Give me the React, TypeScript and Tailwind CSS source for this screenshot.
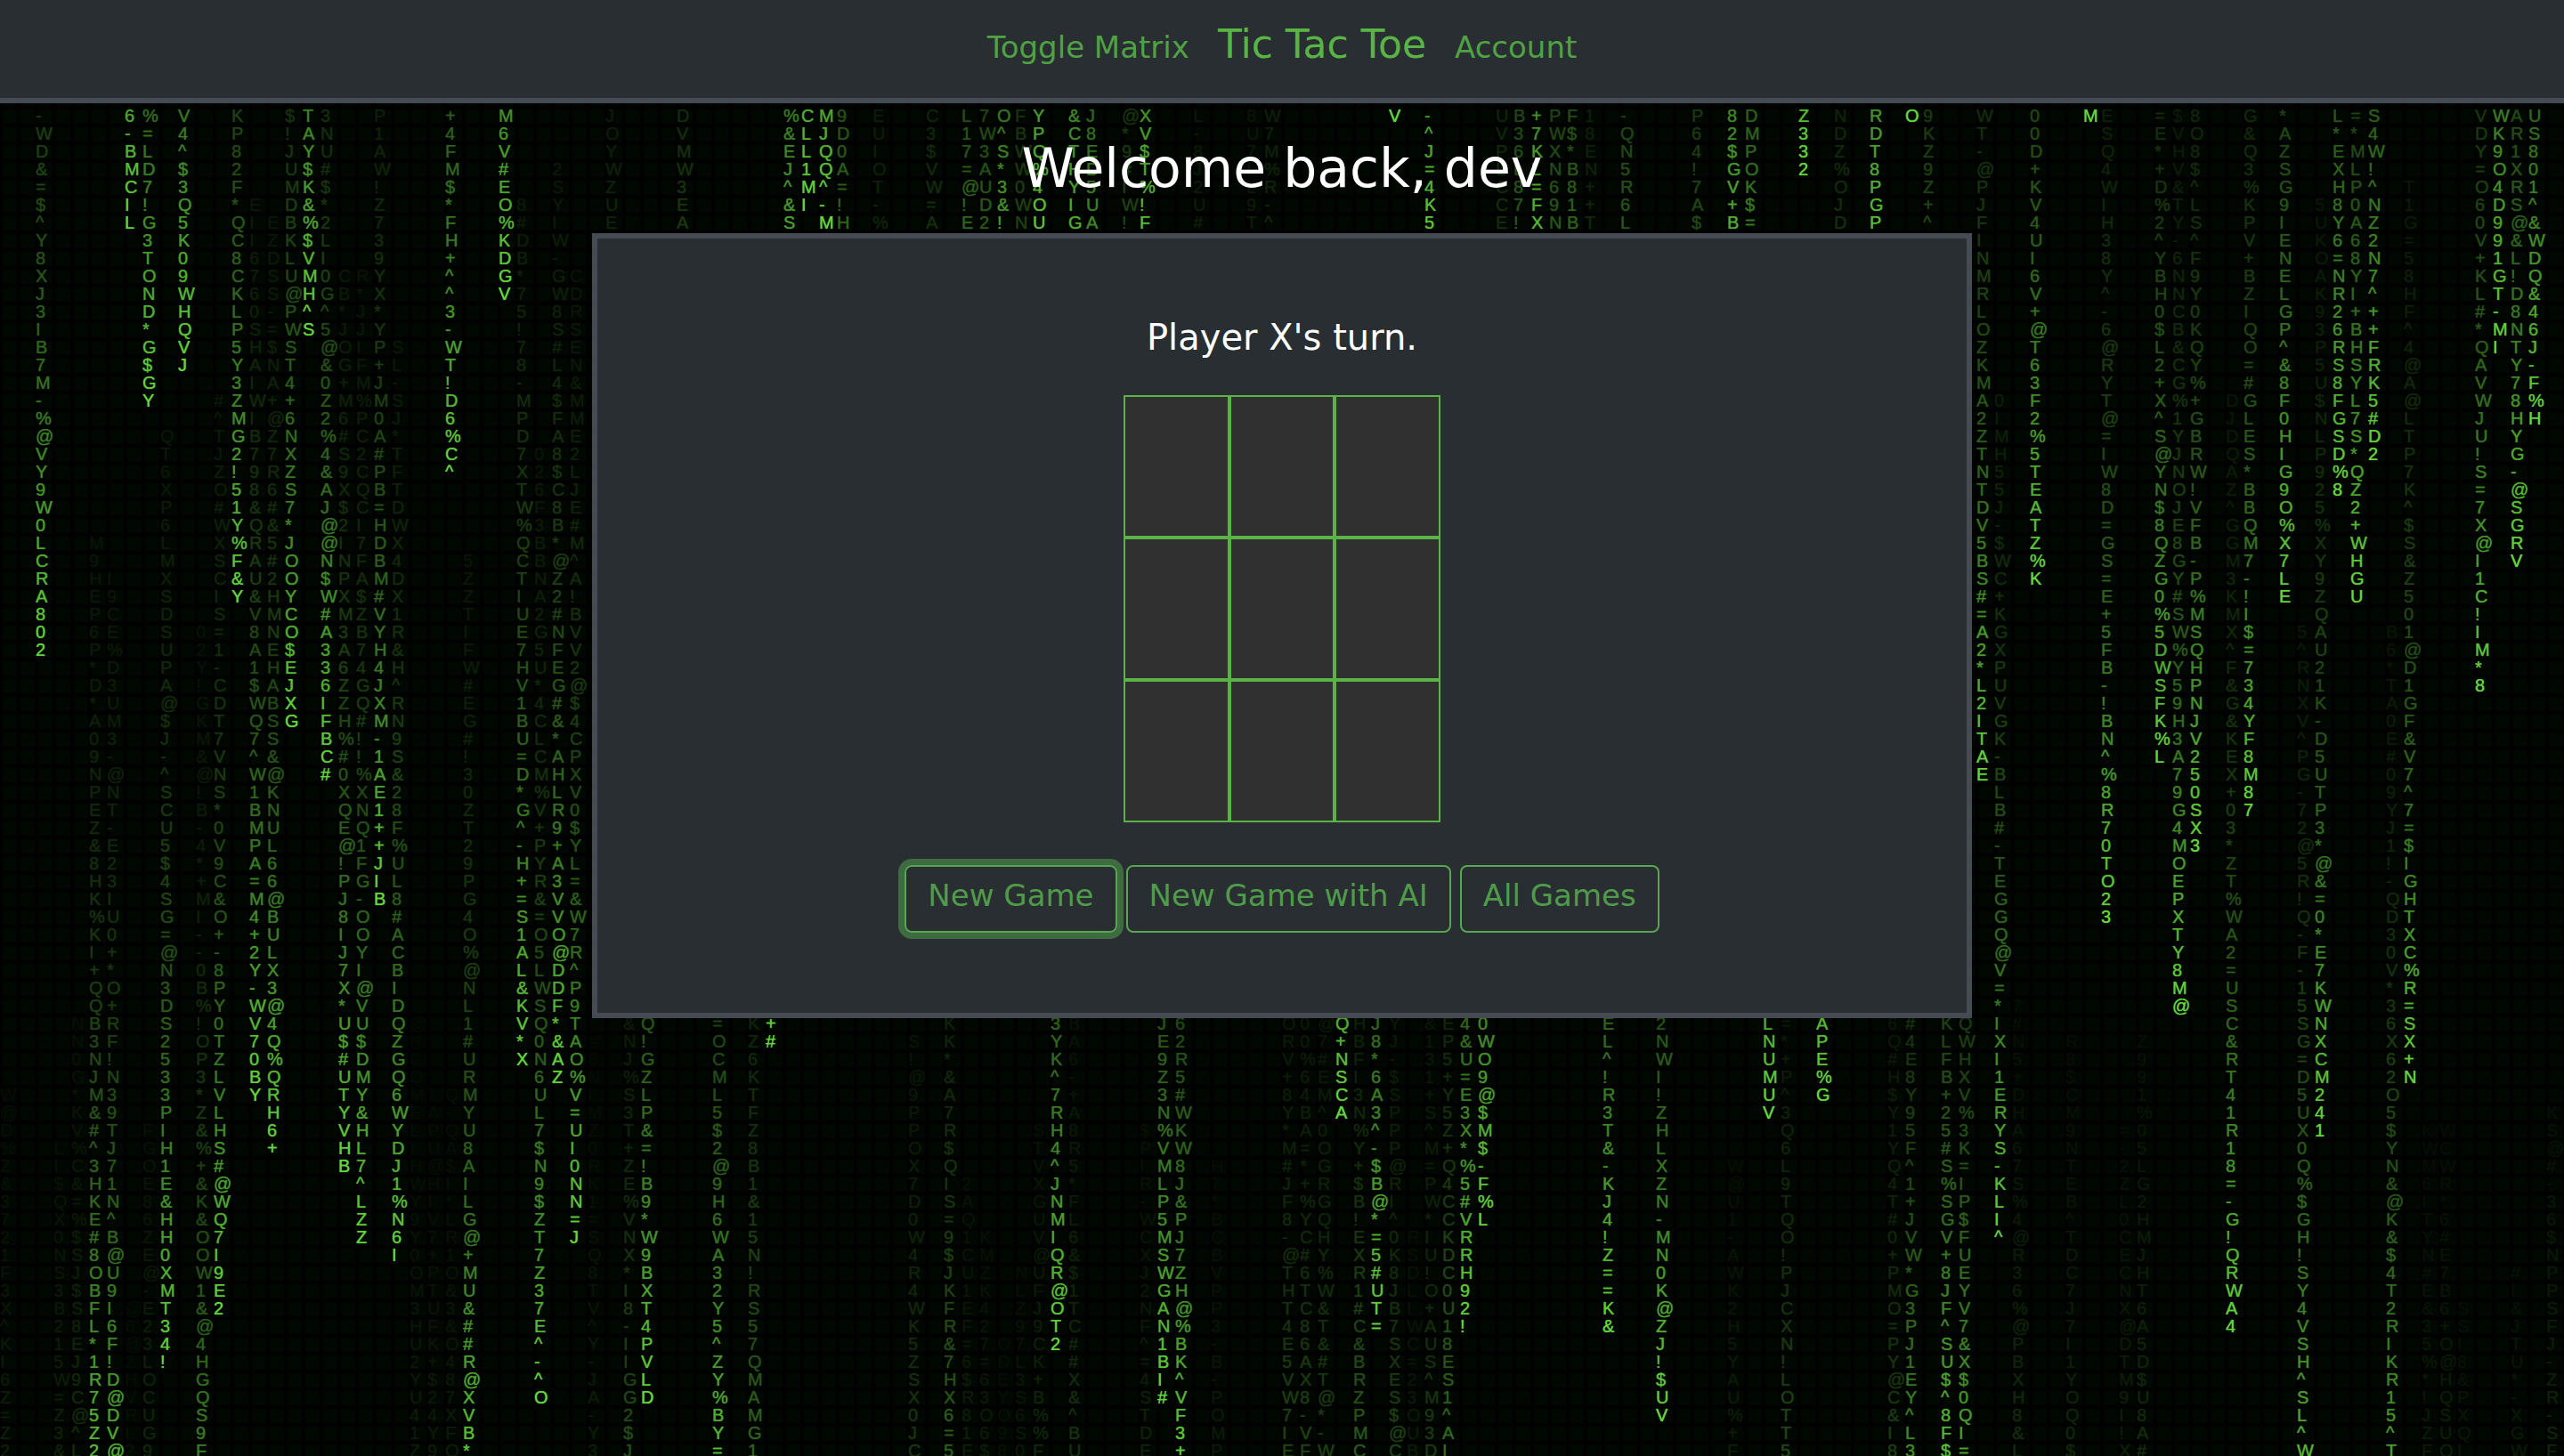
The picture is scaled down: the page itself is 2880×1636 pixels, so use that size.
import React from "react";

type Trail = { col: number; row: number; head: number; text: string };

const ROW_HEIGHT = 20;
const COLUMN_COUNT = 144;
const FADE = 0.957;

/* column, first row, row of the leading glyph, glyphs from top to bottom */
const DROPS: [number, number, number, string][] = [
  [0, 56, 120, "W@D%Z&3721F3X^KI6Z=Z2"],
  [2, 1, 31, "-WD&=$^Y8XJ3IB7M-%@VY9W0LCRA802"],
  [3, 59, 118, "LI$QX0NS3B215W=Z3&"],
  [4, 52, 112, "NN0G*KV%C&=%$SJ$S8EJ9C@^L"],
  [5, 25, 79, "M9HEP6P*D*A09NPEZ&8HK%KI+QQB3NJM&#^3HKE#8OBFL*1R75Z2"],
  [6, 27, 81, "I9CE%D3UM3-@NT-E23IU0+*O+RF!N39TJ71N^B@U9I6F!D@DV@"],
  [7, 1, 7, "6-BMCIL"],
  [7, 68, 134, "@6@2HVRI2"],
  [8, 1, 17, "%=LD7!G3TOND*G$GY"],
  [8, 58, 116, "FGOE86ZE@-E23LOCUG9"],
  [9, 19, 71, "QT6XP6LMXSDSUPA@$J-^SCU5$4SG=@N3DS2533PIH1E&HH0XMT34!"],
  [10, 1, 15, "V4^$3Q5K09WHQVJ"],
  [11, 30, 88, "02Y!GKM&@!B-4*+MI--0B%!OP3*Z&%+&K&OOW1&@4HGQS9F"],
  [12, 17, 68, "#^TJZO#WXSCIS=1-CDT7VNS*0V9C&O+-8PY0TZLVLHS#@WQ7I9E2"],
  [13, 1, 28, "KP82F*QC8CKLP5Y3ZMG2!51Y%F&Y"],
  [14, 6, 56, "EII6760SHAIWIB798&QRAU&V8A1$WQ7^W1BMPA=M4+2Y-WV70BY"],
  [15, 7, 59, "EZDSS-=$NA+@Z7R6#&5#2HMNEHABSS&@KNUL66@BULX3@4Q%QRH6+"],
  [16, 1, 35, "$!JUMDBKLU@PWST4+6NXZS7*JOOYCO$EJXG"],
  [17, 1, 13, "TAY$K&%$VMH^S"],
  [18, 1, 38, "3NU#$*2LI0G^5@&0Z2%4&AJ@@N$W#A336IFBC#"],
  [19, 10, 60, "CB*JOG+M6#S9X$2INPXM3A6ZZH%#0XQE@!PJ8IJ7X*U$#UTYVHB"],
  [20, 10, 64, "R*JJIFM%PC2CQCI7FA$ZB74GQ#!!%XNQ1FG-OOYI@VU$DMY&HL7^LZZ"],
  [21, 1, 45, "P1AW!Z739YX*YP+JM0A#PB=HDBM#VYH4JXM-1AE1++JIB"],
  [22, 14, 65, "SL-SJ*TFTDWX4DX1R&H^RN9S&28F%UL8#ACBIDQZGQ6WYDJ1%N6I"],
  [23, 52, 122, "@HCQMELIHWY9Y0OM3HU2YU41Z"],
  [24, 56, 123, "7APU@HIV7+PTUFK+$24Y9"],
  [25, 1, 21, "+4FM$*FH+^^3-WT!D6%C^"],
  [25, 56, 122, "Q-QA$I*LR1O&3&O487XFO"],
  [26, 26, 78, "5ZZTIFW#EG#!30ZT29PG4O%@NL1#URMYU8AILG@+MU&##R@XVB*"],
  [28, 1, 11, "M6V#EO%KDGV"],
  [29, 6, 54, "8#DB*75!78-MPD7XTW%QCTIUE7HV1BU=D*G^-H+=S1AL&KV*X"],
  [30, 20, 73, "026F3BBNA2G5U*4CLCM%V+PYR&=O5LWSQ0N6UL7$N9$ZT7Z37E^-^O"],
  [31, 4, 55, "2SYIW-GW8S#L4$FA8$C8B*@Z2#NFEG#&*AHLR9+A3VVO@DDF*&AZ"],
  [32, 10, 64, "CDRSEN&MME2LJE#M^A!BVV2@$4CPXV0$YL=&W7R^P9TAO%V=UI0NN=J"],
  [33, 53, 121, "=8NIMZ0RK1=SQ8TV^Y-JA-Y3"],

  [34, 1, 48, "JOYWZUE"],
  [38, 1, 38, "DVMW3EA"],
  [44, 1, 14, "%&EJ^&S"],
  [45, 1, 6, "CLL1MI"],
  [46, 1, 7, "MJQQ^-M"],
  [47, 1, 24, "9D0A=!H"],
  [49, 1, 48, "EUIOT-%"],
  [52, 1, 42, "C3$VW=A"],
  [54, 1, 24, "L17=@!E"],
  [55, 1, 27, "7W3AUD2"],
  [56, 1, 15, "O^S*3&!"],
  [57, 1, 34, "FBWW0WN"],
  [58, 1, 9, "YPQ%4OU"],
  [60, 1, 12, "&CTHYIG"],
  [61, 1, 18, "J8ED5UA"],
  [63, 1, 34, "@*9#IW!"],
  [64, 1, 10, "XV$T%!F"],
  [67, 1, 52, "L-8J2U#"],
  [70, 1, 54, "8U7IL9T"],
  [71, 1, 46, "W7M%R-^"],
  [78, 1, 1, "V"],
  [80, 1, 9, "-^J=4K5"],
  [84, 1, 42, "UVPLCCE"],
  [85, 1, 27, "B36L87!"],
  [86, 1, 11, "+7KL=FX"],
  [87, 1, 28, "PWXN69N"],
  [88, 1, 25, "F$*B81B"],
  [89, 1, 46, "18EN++T"],
  [91, 1, 28, "-QN5R6L"],
  [95, 1, 32, "P64!7A$"],
  [97, 1, 12, "82$GV+B"],
  [98, 1, 20, "DMPOK$="],
  [101, 1, 4, "Z332"],
  [103, 1, 42, "NDZ%OJD"],
  [105, 1, 10, "RDT8PGP"],
  [107, 1, 1, "O"],
  [108, 1, 32, "9KZ9Z+^"],

  [35, 52, 99, "&NJ%S3T+ZE%VNX*I8-IIGG2$J"],
  [36, 52, 73, "Q!GZLP&=!B9*W9BXT4PVLD"],
  [40, 52, 79, "=OCML5$2@9H6WA32Y5^ZY%BY="],
  [42, 52, 93, "KZ6KTFZ8B1&15N!RS57QMAMG1"],
  [43, 52, 53, "+#"],
  [51, 53, 107, "S!@9PPOX7D0W4R4WK5ZSX0JC"],
  [53, 52, 94, "KK*&A7R$QIS=9$JKFR&7HX6=5"],
  [54, 61, 120, "2AQ1CU1EF=6$R81E"],
  [55, 64, 123, "KMZK427=63O6$"],
  [56, 70, 134, "ODEYO98"],
  [57, 66, 126, "NLZ97L3S6S0"],
  [58, 58, 115, "STVXGUV@UFJ9CK+B%%F"],
  [59, 52, 70, "3YK^7RH4^JNMIQR@OT2"],
  [60, 52, 109, "BA6-+A8R5*FL6&$1TC##X&^BU"],
  [64, 58, 118, "$PIR-WCXJ2NF^=4STDE"],
  [65, 52, 73, "JE9Z3N%VMLP5MSWGAN1BI#"],
  [66, 52, 77, "62R5#WKW8J&PJ7ZH@%BK^VF3+"],
  [68, 60, 124, "H7*BCBVPP3-B-POMP"],
  [72, 52, 102, "ORV+8Y*M#JF8-@THT4E5VW7IE"],
  [73, 52, 102, "00%64BA=*+%YC#6TC86AX8-VF"],
  [74, 52, 104, "@7#EM^0OGRGQHY%W&T&#T@*-W"],
  [75, 52, 57, "Q+NSCA"],
  [76, 52, 96, "HBFI3N%Y+$B!EXR1#C&BRZPMC"],
  [77, 52, 69, "J8*6A3^-$B@*=5#UT="],
  [78, 52, 103, "YJ-$SPPP@RI^0K8JB7SXES$@C"],
  [79, 64, 124, "RSDLIWC=23OUB"],
  [80, 52, 106, "&131+S^M=PW*IU!O+AUS^M93D"],
  [81, 52, 92, "EP5+Y5Z+Q4CCKDC0U18ES1^AI"],
  [82, 52, 69, "4&U=E3X*%5#VRRH92!"],
  [83, 52, 63, "0WO9@$M$-F%L"],
  [90, 52, 69, "EL^!R3T&-KJ4!Z==K&"],
  [93, 52, 74, "2NWI!ZHLXZN-MN0K@ZJ!$UV"],
  [97, 60, 121, "W@U1-AWK2H5YAU%+F"],
  [99, 52, 57, "LNUMUV"],
  [100, 52, 101, "=*+P^3Q6L9TQO!PJCXN!LOTT5"],
  [102, 52, 56, "APE%G"],
  [106, 52, 104, "6Q#H$Y1YQ4T#0+PMO=PY@C&I8"],
  [107, 52, 86, "#4E8Y95F^1+JVW*G3PJ1EY^L3"],
  [109, 52, 79, "KLFB+25#S%SGV+8JF^SU$^8F$"],
  [110, 52, 82, "QWHXV%3K=IP$FUEYV7&X$0QI="],

  [111, 1, 38, "WT-@PJFINMRLOZKMA2ZTNTDV5BS#=A2*L2ITAE"],
  [112, 17, 64, "0IMH55J-$WC+KGXPUVGK-BLB#-TEGGQ@V=*IXI1ERYS-KLI^"],
  [113, 51, 112, "7#N5+DHA67S%4@R36%@PBXH8&L"],
  [114, 1, 27, "00D+KV4UI6V+@T63F2%5TEATZ%K"],
  [116, 53, 115, "R8$CM9NTEB^TDC7J7I1YOQ0$"],
  [117, 1, 1, "M"],
  [118, 1, 46, "ESQ4WIH38Y^-6@RYT@=IW8D=GS=E+5FB-!BN^%8R70TO23"],
  [119, 58, 119, "=-2ZL0CECNX@DTM9I!X"],
  [120, 53, 112, "Z991%05LG2HMJHT6A5D$U8A#"],
  [121, 1, 37, "=E*+D%2^YBH0$L2+X^S@YN$8QZG0%5DWSFK%L"],
  [122, 1, 51, "$VHV&TY-6NNCB&CG%1YJNOJE8GY#SW%Y59H3A79G4MOEPXTY8M@"],
  [123, 1, 42, "8O8$^LS^F9Y0KQY%+GBRW!VFB-P%MSQHPNJV250SX3"],
  [125, 17, 69, "DJDQAZ^GGM3KMX^F&G&KEX+03*ZT%WA2=USC&RT41R18=-G!QRWA4"],
  [126, 1, 40, "G&Q3%KPV+BZIQO=#GLES*BBQM7-!I$=734YF8M87"],
  [128, 1, 28, "*AZSG9IENELGP^&8F0HIG9O%X7LE"],
  [129, 30, 80, "5^RNXV^PG-72@5R!Q-F-15SG=D5UX0Q%$GH!SY4VSH^SL^W"],
  [130, 6, 58, "5UKOAK93P5U$NLP925%XY9ZQAU21K-D5UTP3*@&=0*E7KWNXCM241"],
  [131, 1, 22, "L*EXH8Y6=NR26RS8FGSD%8"],
  [132, 1, 28, "=*MLP0A68YI+BHSYL7S*QZ2+WHGU"],
  [133, 1, 20, "S4W!^NZ2N7^++FRK5#D2"],
  [134, 30, 83, "B6*TA0E#09YJ1!-QD30V*36X62O5$YN&@K&$4T2RIKR15^T"],
  [135, 5, 55, "T1G=58HF^4@A@LTP7K^$S&Z501@D1GF&V7^7=$IGHTXC%R=SX+N"],
  [136, 58, 123, "KWM6ITYN#E&35%*!JZF"],
  [137, 58, 121, "WCWR*6#E7B6+O@HQSUO"],
  [138, 68, 128, "SSI8&PXQI"],
  [139, 1, 33, "VDY=O60V+KL#*QAVWJU!S=7X@I1C!IM*8"],
  [140, 1, 14, "WK9O4D991GT-MI"],
  [141, 1, 26, "AR1XRS@&L!D8NTY78HYG-@SGRV"],
  [141, 66, 125, "#I&JTU*-XGW"],
  [142, 1, 18, "US801^&WDQ&46J-F%H"],
  [143, 57, 116, "KS@#-36$NPPSFJ-ZR-SF"],
];

const TRAILS_BY_COLUMN: Trail[][] = Array.from({ length: COLUMN_COUNT }, (_, col) =>
  DROPS.filter((d) => d[0] === col)
    .map(([c, row, head, text]) => ({ col: c, row, head, text }))
    .sort((a, b) => a.row - b.row),
);

function glyphColor(age: number) {
  const a = Math.pow(FADE, Math.max(age, 0));
  return `rgb(${Math.round(100 * a)}, ${Math.round(214 * a)}, ${Math.round(62 * a)})`;
}

function RainColumn({ trails }: { trails: Trail[] }) {
  let nextRow = 1;
  return (
    <div className="w-5 shrink-0">
      {trails.map((t) => {
        const gap = (t.row - nextRow) * ROW_HEIGHT;
        nextRow = t.row + t.text.length;
        return (
          <div key={t.row} style={{ paddingTop: gap }}>
            {t.text.split("").map((ch, i) => (
              <span
                key={i}
                className="block h-5 w-5 whitespace-nowrap"
                style={{ color: glyphColor(t.head - t.row - i) }}
              >
                {ch}
              </span>
            ))}
          </div>
        );
      })}
    </div>
  );
}

function MatrixRain() {
  return (
    <div
      aria-hidden="true"
      className="absolute inset-0 flex overflow-hidden bg-[#010701] bg-[linear-gradient(to_right,#000_1px,transparent_4px,transparent_18px,#000_20px),linear-gradient(to_bottom,#000_2px,transparent_4px,transparent_18px,#000_20px)] bg-[size:20px_20px] pt-[120px] font-['Liberation_Sans',Arial,sans-serif] text-[20px] leading-5 [text-shadow:0_0_1px_currentColor]"
    >
      {TRAILS_BY_COLUMN.map((trails, i) => (
        <RainColumn key={i} trails={trails} />
      ))}
    </div>
  );
}

function NavBar() {
  return (
    <nav className="flex items-baseline justify-center gap-8 border-b-6 border-[#444b53] bg-[#282e32] pt-[24px] pb-[34px] text-[#50a143]">
      <a href="#matrix" className="text-[34px] leading-10">
        Toggle Matrix
      </a>
      <a href="#home" className="text-[44px] leading-[52px] text-[#5ab445]">
        Tic Tac Toe
      </a>
      <a href="#account" className="text-[34px] leading-10">
        Account
      </a>
    </nav>
  );
}

function Board() {
  return (
    <div className="mt-[42px] grid w-[356px] grid-cols-3">
      {Array.from({ length: 9 }, (_, i) => (
        <button
          key={i}
          type="button"
          aria-label={`Square ${i + 1}`}
          className="h-40 border-2 border-[#5ab445] bg-[#303030]"
        />
      ))}
    </div>
  );
}

function GameButton({ children, active = false }: { children: React.ReactNode; active?: boolean }) {
  return (
    <button
      type="button"
      className={
        "rounded-lg border-2 border-[#57a750] px-6 pt-3 pb-5 text-[34px] leading-10 text-[#509b4a]" +
        (active ? " ring-7 ring-[#3f6b40]" : "")
      }
    >
      {children}
    </button>
  );
}

export default function App() {
  return (
    <div className="relative min-h-screen bg-black font-['DejaVu_Sans',Verdana,sans-serif]">
      <MatrixRain />
      <div className="relative">
        <NavBar />
        <main className="flex flex-col items-center pt-[38px]">
          <h1 className="text-[60px] leading-[70px] text-white">Welcome back, dev</h1>
          <section className="mt-[38px] flex w-full max-w-[1550px] flex-col items-center border-6 border-[#444b53] bg-[#282e32] pt-[88px] pb-[90px]">
            <h2 className="text-[40px] leading-[46px] text-white">Player X's turn.</h2>
            <Board />
            <div className="mt-12 flex gap-[10px]">
              <GameButton active>New Game</GameButton>
              <GameButton>New Game with AI</GameButton>
              <GameButton>All Games</GameButton>
            </div>
          </section>
        </main>
      </div>
    </div>
  );
}
